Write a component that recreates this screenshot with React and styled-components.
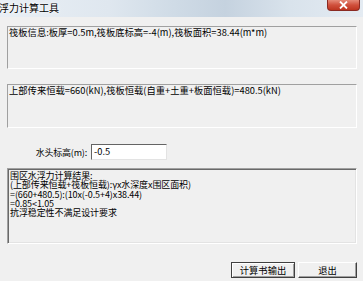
import React from 'react'
import styled, { createGlobalStyle } from 'styled-components'

const GlobalStyle = createGlobalStyle`
  html, body {
    margin: 0;
    padding: 0;
    background: #f0f0f0;
  }
  body {
    font-family: "Noto Sans CJK SC", "Liberation Sans", sans-serif;
  }
`

const Window = styled.div`
  width: 363px;
  height: 281px;
  display: flex;
  flex-direction: column;
  background: #f0f0f0;
  overflow: hidden;
`

const TitleBar = styled.div`
  height: 17px;
  display: flex;
  align-items: flex-start;
  justify-content: space-between;
  background: linear-gradient(to right, #e9eff5 0%, #dfe7ef 30%, #cfdbe6 48%, #c5d2df 62%, #d9e3ec 80%, #e4ebf2 100%);
`

const Title = styled.span`
  font-size: 10px;
  line-height: 14px;
  padding-top: 1px;
  margin-left: -1px;
  color: #000;
  text-shadow: 0 0 4px #fff, 0 0 2px #fff;
`

const CloseButton = styled.div`
  width: 31px;
  height: 10px;
  margin-right: 3px;
  border: 1px solid #8a2a22;
  border-top: none;
  border-radius: 0 0 4px 4px;
  background: linear-gradient(#e58a78, #d0503c 50%, #bd3520);
  display: flex;
  align-items: center;
  justify-content: center;
  svg {
    display: block;
  }
`

const Body = styled.div`
  flex: 1;
  display: flex;
  flex-direction: column;
  padding: 9px 6px 0 7px;
`

const InfoBox = styled.div`
  height: ${p => p.$h}px;
  margin-bottom: ${p => p.$mb}px;
  border-top: 1px solid #a0a0a0;
  border-left: 1px solid #a0a0a0;
  border-bottom: 1px solid #fff;
  border-right: 1px solid #fff;
  box-sizing: border-box;
  padding: 0 1px;
  font-size: 9.3px;
  line-height: 11px;
  color: #000;
  white-space: nowrap;
`

const FieldRow = styled.div`
  display: flex;
  align-items: center;
  height: 16px;
  margin-top: 1px;
  margin-bottom: 8px;
`

const Label = styled.span`
  width: 80px;
  text-align: right;
  font-size: 9px;
  letter-spacing: -0.2px;
  margin-right: 4px;
  color: #000;
`

const Input = styled.div`
  width: 76px;
  height: 16px;
  box-sizing: border-box;
  background: #fff;
  border-top: 1px solid #646464;
  border-left: 1px solid #646464;
  border-bottom: 1px solid #e3e3e3;
  border-right: 1px solid #e3e3e3;
  font-size: 9.3px;
  line-height: 13px;
  padding-left: 2px;
  color: #000;
`

const ResultBox = styled.div`
  height: 76px;
  box-sizing: border-box;
  border-top: 1px solid #a0a0a0;
  border-left: 1px solid #a0a0a0;
  border-bottom: 1px solid #fff;
  border-right: 1px solid #fff;
  box-shadow: inset 1px 1px 0 #696969, inset -1px -1px 0 #e3e3e3;
  padding: 2px 2px;
  font-size: 9px;
  line-height: 9.3px;
  color: #000;
  white-space: nowrap;
  letter-spacing: -0.1px;
  margin-bottom: 18px;
`

const ButtonRow = styled.div`
  display: flex;
  justify-content: flex-end;
  gap: 3px;
`

const Button = styled.div`
  width: ${p => p.$w}px;
  height: 16px;
  box-sizing: border-box;
  display: flex;
  align-items: center;
  justify-content: center;
  background: #f0f0f0;
  border: 1px solid;
  border-color: ${p => (p.$default ? '#404040' : '#fff #404040 #404040 #fff')};
  box-shadow: ${p =>
    p.$default
      ? 'inset 1px 1px 0 #fff, inset -1px -1px 0 #a0a0a0'
      : 'inset -1px -1px 0 #a0a0a0'};
  font-size: 9.3px;
  color: #000;
`

export default function App() {
  return (
    <>
      <GlobalStyle />
      <Window>
        <TitleBar>
          <Title>浮力计算工具</Title>
          <CloseButton>
            <svg width="9" height="8" viewBox="0 0 9 8">
              <path d="M1 0.5 L8 7.5 M8 0.5 L1 7.5" stroke="#fff" strokeWidth="1.8" />
            </svg>
          </CloseButton>
        </TitleBar>
        <Body>
          <InfoBox $h={43} $mb={15}>
            筏板信息:板厚=0.5m,筏板底标高=-4(m),筏板面积=38.44(m*m)
          </InfoBox>
          <InfoBox $h={44} $mb={15}>
            上部传来恒载=660(kN),筏板恒载(自重+土重+板面恒载)=480.5(kN)
          </InfoBox>
          <FieldRow>
            <Label>水头标高(m):</Label>
            <Input>-0.5</Input>
          </FieldRow>
          <ResultBox>
            围区水浮力计算结果:
            <br />
            (上部传来恒载+筏板恒载):γx水深度x围区面积)
            <br />
            =(660+480.5):(10x(-0.5+4)x38.44)
            <br />
            =0.85&lt;1.05
            <br />
            抗浮稳定性不满足设计要求
          </ResultBox>
          <ButtonRow>
            <Button $w={64} $default>计算书输出</Button>
            <Button $w={59}>退出</Button>
          </ButtonRow>
        </Body>
      </Window>
    </>
  )
}
